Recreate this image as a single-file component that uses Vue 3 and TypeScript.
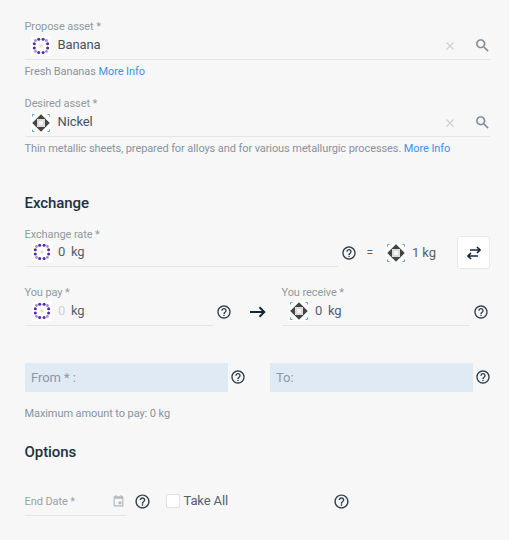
<script setup lang="ts">
import { h, type FunctionalComponent } from 'vue'

interface AssetField {
  label: string
  name: string
  icon: 'banana' | 'nickel'
  note: string
}

const assets: AssetField[] = [
  { label: 'Propose asset *', name: 'Banana', icon: 'banana', note: 'Fresh Bananas' },
  {
    label: 'Desired asset *',
    name: 'Nickel',
    icon: 'nickel',
    note: 'Thin metallic sheets, prepared for alloys and for various metallurgic processes.',
  },
]

const AssetIcon: FunctionalComponent<{ kind: string }> = (props) =>
  h('svg', { width: 20, height: 20, viewBox: '0 0 20 20' }, props.kind === 'banana'
    ? [
        h('rect', { width: 20, height: 20, fill: '#fff' }),
        ...[[7.7, 3.3], [12.1, 3.3], [16.6, 7.7], [16.6, 12.1], [12.1, 16.6], [7.7, 16.6], [3.3, 12.1], [3.3, 7.7]]
          .map(([cx, cy]) => h('circle', { cx, cy, r: 1.5, fill: '#5128b4' })),
        ...[[4.5, 4.5], [15.4, 4.5], [15.4, 15.4], [4.5, 15.4]]
          .map(([cx, cy]) => h('circle', { cx, cy, r: 1.4, fill: '#a08ad9' })),
        h('path', { d: 'M10 8.3v3.4M8.3 10h3.4', stroke: '#dedee2', 'stroke-width': 1.4 }),
      ]
    : [
        h('rect', { width: 20, height: 20, fill: '#fff' }),
        h('path', { d: 'M1.500 3.500V1.500H3.500M16.500 1.500h2V3.500M18.500 16.500v2H16.500M3.500 18.500H1.500V16.500', stroke: '#59a5df', 'stroke-width': 1, fill: 'none' }),
        h('path', { d: 'M10 1.2L14.8 6H5.2zM18.8 10L14 14.8V5.2zM10 18.8L5.2 14h9.6zM1.2 10L6 5.2v9.6z', fill: '#444' }),
        h('rect', { x: 6, y: 6, width: 8, height: 8, rx: 0.5, fill: '#dadada' }),
        h('rect', { x: 8, y: 8, width: 4, height: 4, fill: '#f4f4f4' }),
      ])

const HelpIcon: FunctionalComponent<{ size?: number }> = (props) =>
  h('svg', { width: props.size ?? 16, height: props.size ?? 16, viewBox: '0 0 24 24', fill: '#2d3d4d' }, [
    h('path', {
      d: 'M11 18h2v-2h-2v2zm1-16C6.48 2 2 6.48 2 12s4.48 10 10 10 10-4.48 10-10S17.52 2 12 2zm0 18c-4.41 0-8-3.59-8-8s3.59-8 8-8 8 3.59 8 8-3.59 8-8 8zm0-14c-2.21 0-4 1.79-4 4h2c0-1.1.9-2 2-2s2 .9 2 2c0 2-3 1.75-3 5h2c0-2.25 3-2.5 3-5 0-2.21-1.79-4-4-4z',
    }),
  ])
</script>

<template>
  <main class="form">
    <section v-for="asset in assets" :key="asset.name" class="asset">
      <label class="label">{{ asset.label }}</label>
      <div class="control wide">
        <AssetIcon class="asset-icon" :kind="asset.icon" />
        <span class="name">{{ asset.name }}</span>
        <svg class="clear" width="8" height="8" viewBox="0 0 8 8"><path d="M.5.5l7 7M7.5.5l-7 7" stroke="#cbd0d4" stroke-width="1.2" /></svg>
        <svg class="search" width="17" height="17" viewBox="0 0 24 24" fill="#7b8a96" stroke="#7b8a96" stroke-width=".3"><path d="M15.5 14h-.79l-.28-.27A6.471 6.471 0 0016 9.500 6.500 6.500 0 109.500 16c1.610 0 3.090-.590 4.230-1.570l.270.280v.790l5 4.990L20.490 19l-4.990-5zm-6 0C7.010 14 5 11.990 5 9.500S7.010 5 9.500 5 14 7.010 14 9.500 11.990 14 9.500 14z" /></svg>
      </div>
      <p class="note">{{ asset.note }} <a>More Info</a></p>
    </section>

    <h2>Exchange</h2>
    <div class="rate">
      <div class="rate-field">
        <label class="label rate-label">Exchange rate *</label>
        <div class="control"><AssetIcon kind="banana" /><span class="num">0</span><span>kg</span></div>
      </div>
      <HelpIcon class="rate-help" />
      <span class="equals">=</span>
      <AssetIcon class="rate-icon" kind="nickel" />
      <span class="unit">1 kg</span>
      <button class="swap" type="button" aria-label="Swap">
        <svg width="14" height="14" viewBox="0 0 14 14" fill="none" stroke="#172b3c" stroke-width="1.7"><path d="M3 4h10M10 1l3 3-3 3M11 10H1M4 7l-3 3 3 3" /></svg>
      </button>
    </div>

    <div class="amounts">
      <div class="amount">
        <label class="label">You pay *</label>
        <div class="control"><AssetIcon kind="banana" /><span class="num faint">0</span><span>kg</span></div>
      </div>
      <HelpIcon />
      <svg class="arrow" width="16" height="12" viewBox="0 0 16 12" fill="none" stroke="#142838" stroke-width="1.9"><path d="M0 6h14M9.500 1.300L14.300 6l-4.800 4.700" /></svg>
      <div class="amount">
        <label class="label">You receive *</label>
        <div class="control receive"><AssetIcon kind="nickel" /><span class="num">0</span><span>kg</span></div>
      </div>
      <HelpIcon />
    </div>

    <div class="range">
      <div class="box">From * :</div>
      <HelpIcon />
      <div class="box">To:</div>
      <HelpIcon />
    </div>
    <p class="maximum">Maximum amount to pay: 0 kg</p>

    <h2 class="options-title">Options</h2>
    <div class="options">
      <div class="date">
        <span>End Date *</span>
        <svg width="11" height="12" viewBox="0 0 11 12"><path d="M1.200 2h8.600v8.800H1.200z" fill="none" stroke="#b3b9bf" stroke-width="1.200" /><path d="M1 1.500h9v2.300H1zM2.300.300h1.300v2H2.300zM7.400.300h1.300v2H7.400zM5.500 6.400h2.800v2.800H5.500z" fill="#b3b9bf" /></svg>
      </div>
      <HelpIcon class="date-help" :size="17" />
      <label class="take"><span class="check"></span>Take All</label>
      <HelpIcon class="take-help" :size="17" />
    </div>
  </main>
</template>

<style>
body {
  background: #f7f7f7;
}
</style>

<style scoped>
.form {
  box-sizing: border-box;
  width: 509px;
  height: 540px;
  padding: 19px 18px 0 25px;
  border-right: 1px solid #f2f3f4;
  font-family: Roboto, 'Liberation Sans', sans-serif;
  font-size: 13px;
  letter-spacing: -0.12px;
  color: #53616d;
}
svg {
  display: block;
  flex: none;
}
p, h2 {
  margin: 0;
}
.asset {
  height: 77px;
}
.label {
  display: block;
  height: 16px;
  font-size: 11px;
  line-height: 16px;
  color: #8f9aa3;
}
.label,
.note,
.maximum,
.date {
  letter-spacing: -0.09px;
  text-indent: -0.5px;
}
.rate-label {
  line-height: 18px;
}
.control {
  box-sizing: border-box;
  display: flex;
  align-items: center;
  height: 25px;
  padding: 0 0 4px 6.5px;
  border-bottom: 1px solid #e4e5e6;
  line-height: 20px;
}
.wide {
  width: 465px;
  padding-left: 6px;
  color: #46535f;
}
.asset-icon {
  margin: 0.5px 0 -0.5px;
}
.name {
  margin-left: 6.5px;
}
.clear {
  margin: 1px 0 0 auto;
}
.search {
  margin: 1px -1px 0 20px;
}
.note {
  padding-top: 4px;
  font-size: 11px;
  line-height: 16px;
  color: #8793a0;
  white-space: nowrap;
}
.note a {
  color: #4390e8;
}
h2 {
  padding: 20px 0 0;
  font-size: 15px;
  font-weight: 500;
  line-height: 20px;
  letter-spacing: -0.06px;
  text-indent: -0.5px;
  color: #213143;
}
.rate {
  display: flex;
  height: 59px;
  padding-top: 13px;
  box-sizing: border-box;
}
.rate-field {
  width: 313px;
}
.num {
  width: 7px;
  margin: 0 6px 0 6.5px;
}
.faint {
  color: #cfd3d7;
}
.rate-help {
  margin: 19px 0 0 3px;
}
.equals {
  margin: 16px 0 0 10px;
  line-height: 22px;
  font-size: 12px;
}
.rate-icon {
  margin: 16.5px 0 0 13px;
}
.unit {
  width: 37px;
  margin: 17px 0 0 6px;
  line-height: 20px;
}
.swap {
  box-sizing: border-box;
  display: flex;
  align-items: center;
  justify-content: center;
  width: 33px;
  height: 33px;
  margin: 10px 0 0 8px;
  padding: 0;
  border: 1px solid #e7e8e8;
  border-radius: 3px;
  background: #fff;
}
.amounts {
  display: grid;
  grid-template-columns: 188px 22px 47px 188px 22px;
  height: 91px;
  padding-top: 13px;
  box-sizing: border-box;
}
.amounts > svg {
  margin: 19px 0 0 3px;
}
.amounts > .arrow {
  margin: 21px 0 0 15px;
}
.range {
  display: grid;
  grid-template-columns: 203px 42px 203px 16px;
  align-items: center;
  height: 29px;
}
.range > svg {
  margin: -1px 0 0 2px;
}
.box {
  height: 29px;
  padding-left: 6px;
  line-height: 29px;
  letter-spacing: -0.05px;
  background: #e0eaf5;
  color: #8b98a6;
}
.maximum {
  padding-top: 14px;
  font-size: 11px;
  line-height: 16px;
  color: #8793a0;
}
.options-title {
  padding-top: 20px;
}
.options {
  display: flex;
  align-items: flex-start;
  padding-top: 25px;
}
.date {
  box-sizing: border-box;
  display: flex;
  align-items: center;
  justify-content: space-between;
  width: 101px;
  height: 29px;
  padding: 0 2px 0 0;
  border-bottom: 1px solid #e4e5e6;
  font-size: 11px;
  color: #98a2aa;
}
.date-help {
  margin: 6px 0 0 7.5px;
}
.take {
  display: flex;
  align-items: center;
  height: 27px;
  width: 167px;
  margin-left: 15.5px;
}
.check {
  box-sizing: border-box;
  width: 14px;
  height: 14px;
  margin-right: 3.5px;
  border: 1px solid #e0e2e3;
  border-radius: 2px;
  background: #fff;
}
.take-help {
  margin-top: 6px;
}
</style>
